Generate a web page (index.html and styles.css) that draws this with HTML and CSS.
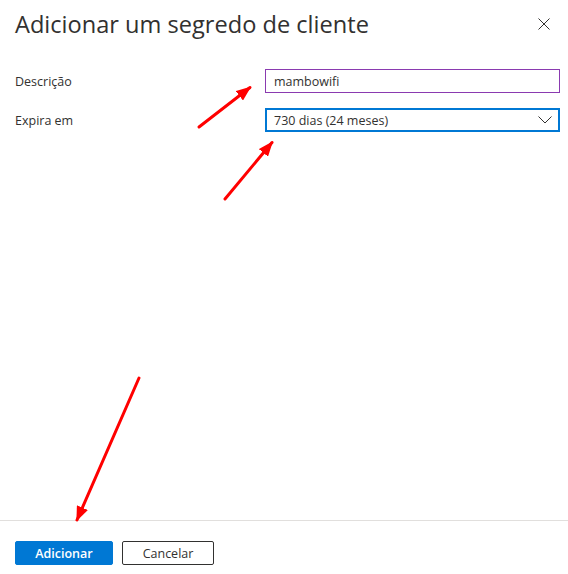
FILE: index.html
```html
<!DOCTYPE html>
<html lang="pt">
<head>
<meta charset="utf-8">
<title>Adicionar um segredo de cliente</title>
<link rel="stylesheet" href="styles.css">
</head>
<body>
<div class="panel">
  <header class="header">
    <h1 class="title">Adicionar um segredo de cliente</h1>
    <button class="close" aria-label="Fechar">
      <svg width="12" height="12" viewBox="0 0 12 12"><path d="M0.5 0.5 L11.5 11.5 M11.5 0.5 L0.5 11.5" stroke="#323130" stroke-width="1" fill="none"/></svg>
    </button>
  </header>
  <main class="form">
    <label class="label" for="desc">Descrição</label>
    <div class="field input"><span class="value" id="desc">mambowifi</span></div>
    <label class="label">Expira em</label>
    <div class="field select">
      <span class="value">730 dias (24 meses)</span>
      <svg class="chev" width="14" height="8" viewBox="0 0 14 8"><path d="M0.5 0.5 L7 7 L13.5 0.5" stroke="#323130" stroke-width="1" fill="none"/></svg>
    </div>
  </main>
  <footer class="footer">
    <button class="btn primary">Adicionar</button>
    <button class="btn secondary">Cancelar</button>
  </footer>
</div>
<svg class="arrows" width="568" height="574" viewBox="0 0 568 574">
  <defs>
    <marker id="head" markerWidth="5" markerHeight="4" refX="4.5" refY="2" orient="auto" markerUnits="strokeWidth">
      <path d="M0 0 L5 2 L0 4 Z" fill="#f00"/>
    </marker>
  </defs>
  <line x1="199" y1="127" x2="250" y2="87.5" stroke="#f00" stroke-width="3" stroke-linecap="round" marker-end="url(#head)"/>
  <line x1="225" y1="199" x2="272" y2="142.5" stroke="#f00" stroke-width="3" stroke-linecap="round" marker-end="url(#head)"/>
  <line x1="139" y1="378" x2="77" y2="520" stroke="#f00" stroke-width="3" stroke-linecap="round" marker-end="url(#head)"/>
</svg>
</body>
</html>
```
FILE: styles.css
```css
* { box-sizing: border-box; }
html, body { margin: 0; padding: 0; background: #fff; }
body {
  font-family: "Open Sans", "Noto Sans", "Liberation Sans", sans-serif;
  color: #323130;
  width: 568px;
  height: 574px;
  position: relative;
  overflow: hidden;
}
.panel {
  display: flex;
  flex-direction: column;
  height: 574px;
}
.header {
  height: 48px;
  display: flex;
  align-items: center;
  justify-content: space-between;
  padding: 0 18px 0 15px;
}
.title {
  margin: 0;
  font-size: 23.6px;
  font-weight: 400;
  color: #323130;
  letter-spacing: 0;
}
.close {
  border: 0;
  background: none;
  padding: 0;
  width: 12px;
  height: 12px;
  display: flex;
}
.form {
  flex: 1;
  display: grid;
  grid-template-columns: 250px 1fr;
  grid-auto-rows: 24px;
  row-gap: 15px;
  align-content: start;
  align-items: center;
  padding: 21px 8px 0 15px;
}
.label {
  font-size: 12.5px;
  color: #323130;
}
.field {
  height: 24px;
  display: flex;
  align-items: center;
  justify-content: space-between;
  font-size: 12.5px;
  color: #323130;
}
.input {
  border: 1px solid #8a3ab0;
  padding: 0 8px;
}
.select {
  border: 2px solid #0078d4;
  padding: 0 6px 0 7px;
}
.chev { display: block; }
.footer {
  border-top: 1px solid #e1dfdd;
  padding: 20px 15px 9px;
  display: flex;
  gap: 9px;
}
.btn {
  height: 24px;
  font-family: inherit;
  font-size: 12.5px;
  border-radius: 2px;
  padding: 0;
  cursor: pointer;
}
.primary {
  width: 98px;
  background: #0078d4;
  border: 1px solid #0078d4;
  color: #fff;
  font-weight: 600;
}
.secondary {
  width: 92px;
  background: #fff;
  border: 1px solid #323130;
  color: #323130;
}
.arrows {
  position: absolute;
  left: 0;
  top: 0;
  pointer-events: none;
}
```
